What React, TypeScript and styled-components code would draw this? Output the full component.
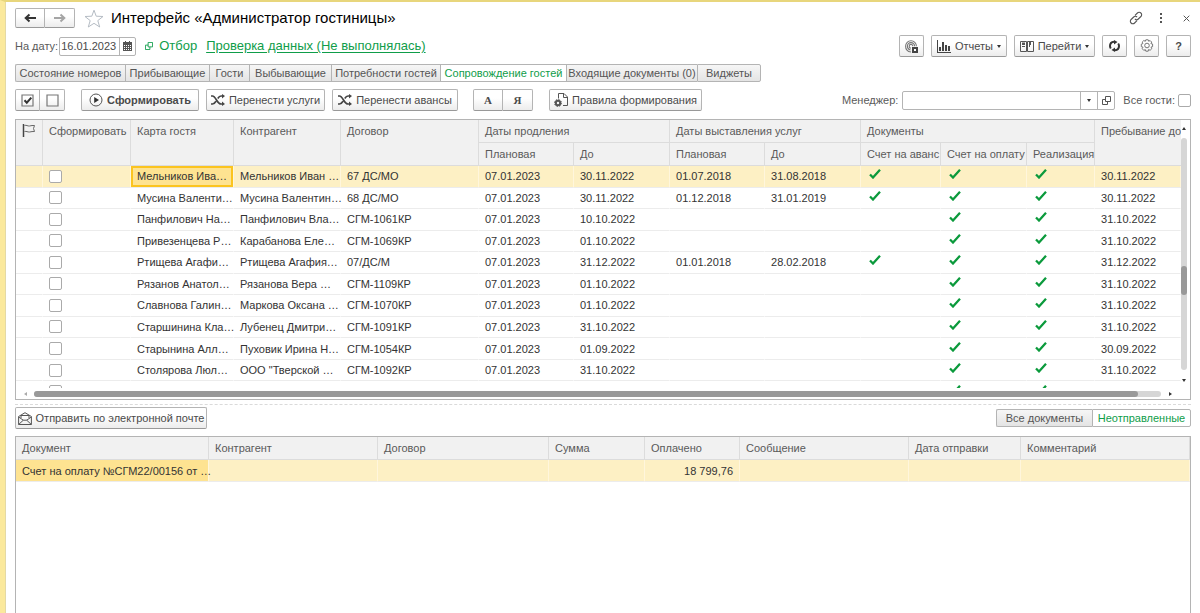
import React, { useState } from "react";
import styled, { createGlobalStyle, css } from "styled-components";

const GlobalStyle = createGlobalStyle`
  * { box-sizing: border-box; }
  body {
    margin: 0;
    background: #fff;
    color: #4a4a4a;
    font-family: "Liberation Sans", Arial, sans-serif;
    font-size: 11px;
    line-height: 14px;
  }
  button, input { font: inherit; color: inherit; }
`;

const green = "#0f9d4a";
const line = "#b4b4b4";

const Window = styled.div`
  min-height: 100vh;
  display: flex;
  flex-direction: column;
  border-left: 5px solid #fbe99c;
  border-top: 2px solid #e8d67c;
  padding: 6px 9px 0 10px;
  box-shadow: inset 1px 0 0 #e4d9a4;
`;

const Row = styled.div<{ $h: number; $mb: number }>`
  display: flex;
  align-items: center;
  height: ${(p) => p.$h}px;
  margin-bottom: ${(p) => p.$mb}px;
`;

const Group = styled.div<{ $gap?: number; $ml?: number; $push?: boolean }>`
  display: flex;
  align-items: center;
  flex-shrink: 0;
  gap: ${(p) => p.$gap ?? 0}px;
  margin-left: ${(p) => (p.$push ? "auto" : `${p.$ml ?? 0}px`)};
`;

const raised = css`
  border: 1px solid ${line};
  border-bottom-color: #999;
  border-radius: 2px;
  background: linear-gradient(#fff 40%, #ececec);
`;

const Button = styled.button<{ $w?: number; $bold?: boolean }>`
  ${raised}
  display: flex;
  align-items: center;
  justify-content: center;
  gap: 4px;
  height: 22px;
  width: ${(p) => (p.$w ? `${p.$w}px` : "auto")};
  padding: 0;
  white-space: nowrap;
  font-weight: ${(p) => (p.$bold ? 700 : 400)};
  svg { flex-shrink: 0; }
`;

const Joined = styled.div`
  display: flex;
  > button:not(:first-child) {
    border-left: 0;
    border-top-left-radius: 0;
    border-bottom-left-radius: 0;
  }
  > button:not(:last-child) {
    border-top-right-radius: 0;
    border-bottom-right-radius: 0;
  }
`;

const Letter = styled.span`
  font-family: "Liberation Serif", "Times New Roman", serif;
  font-weight: 700;
  font-size: 11px;
`;

const NavButton = styled(Button)`
  height: 20px;
  width: 30px;
`;

const IconButton = styled.button`
  display: flex;
  align-items: center;
  justify-content: center;
  width: 10px;
  height: 16px;
  padding: 0;
  border: 0;
  background: none;
  svg { flex-shrink: 0; }
`;

const Title = styled.h1`
  margin: 0 0 0 7px;
  color: #000;
  font-size: 15px;
  line-height: 20px;
  font-weight: 400;
  white-space: nowrap;
`;

const Label = styled.label`
  color: #5a5a5a;
  white-space: nowrap;
`;

const Field = styled.div<{ $w: number }>`
  display: flex;
  width: ${(p) => p.$w}px;
  height: 19px;
  border: 1px solid ${line};
  border-radius: 2px;
  background: #fff;
`;

const FieldInput = styled.input`
  flex: 1;
  min-width: 0;
  border: 0;
  padding: 0 1px;
  background: none;
  outline: 0;
`;

const FieldButton = styled.button<{ $w: number }>`
  display: flex;
  align-items: center;
  justify-content: center;
  width: ${(p) => p.$w}px;
  padding: 0;
  border: 0;
  border-left: 1px solid ${line};
  background: none;
`;

const FilterButton = styled.button`
  display: flex;
  align-items: center;
  gap: 6px;
  padding: 0;
  border: 0;
  background: none;
  color: ${green};
  font-size: 13px;
`;

const CheckLink = styled.a`
  color: ${green};
  font-size: 13px;
  text-decoration: underline;
  text-underline-offset: 2px;
  white-space: nowrap;
`;

const Tab = styled.button<{ $w: number; $active?: boolean }>`
  width: ${(p) => p.$w}px;
  height: 18px;
  padding: 0;
  border: 1px solid ${line};
  border-right-width: 0;
  background: ${(p) => (p.$active ? "#fff" : "linear-gradient(#f6f6f6, #e4e4e4)")};
  color: ${(p) => (p.$active ? green : "#555")};
  white-space: nowrap;
  &:first-child { border-radius: 2px 0 0 2px; }
  &:last-child { border-right-width: 1px; border-radius: 0 2px 2px 0; }
`;

const Tick = styled.input.attrs({ type: "checkbox" })`
  appearance: none;
  display: block;
  width: 13px;
  height: 13px;
  margin: 0;
  border: 1px solid #aaa;
  border-radius: 2px;
  background: #fff;
  &:checked { background: ${green}; }
`;

const Frame = styled.section`
  display: grid;
  grid-template-columns: 1fr 9px;
  grid-template-rows: 268px 11px;
  border: 1px solid ${line};
`;

const Clip = styled.div`
  overflow: hidden;
`;

const Grid = styled.table`
  width: 100%;
  table-layout: fixed;
  border-collapse: separate;
  border-spacing: 0;
`;

const GuestGrid = styled(Grid)`
  height: 283px;
`;

const Th = styled.th`
  height: 23px;
  padding: 4px 0 4px 6px;
  border-right: 1px solid #dcdcdc;
  border-bottom: 1px solid #dcdcdc;
  background: #f1f1f1;
  color: #5a5a5a;
  font-weight: 400;
  text-align: left;
  vertical-align: top;
  white-space: nowrap;
  &[data-last] { border-right: 0; }
`;

const Td = styled.td<{ $selected?: boolean; $focus?: "box" | "fill"; $right?: boolean }>`
  padding: 0 6px;
  border-right: 1px solid ${(p) => (p.$selected ? "#fff6dc" : "transparent")};
  border-bottom: 1px solid #ececec;
  background: ${(p) => (p.$focus ? "#fee391" : p.$selected ? "#fdf0c4" : "#fff")};
  box-shadow: ${(p) => (p.$focus === "box" ? "inset 0 0 0 2px #fbc41f" : "none")};
  color: #333;
  text-align: ${(p) => (p.$right ? "right" : "left")};
  white-space: nowrap;
  svg { display: block; margin: 0 0 4px 2px; }
`;

const VBar = styled.div`
  display: flex;
  flex-direction: column;
  align-items: center;
  justify-content: space-between;
  padding: 6px 3px 6px 0;
`;

const VTrack = styled.div`
  width: 6px;
  height: 232px;
  padding-top: 128px;
  border-radius: 3px;
  background: #d6d6d6;
`;

const VThumb = styled.div`
  height: 29px;
  border-radius: 3px;
  background: #999;
`;

const HBar = styled.div`
  grid-column: 1 / -1;
  display: flex;
  align-items: center;
  gap: 7px;
  padding: 0 18px 0 7px;
`;

const HTrack = styled.div`
  flex: 1;
  height: 6px;
  border-radius: 3px;
  background: #d6d6d6;
`;

const HThumb = styled.div`
  width: 98%;
  height: 6px;
  border-radius: 3px;
  background: #999;
`;

const Splitter = styled.div`
  height: 1px;
  margin: 4px 0 2px;
  border-top: 1px dashed #dadada;
`;

const Documents = styled.section`
  flex: 1;
  border: 1px solid ${line};
  border-bottom: 0;
`;

const DocRow = styled.tr`
  height: 22px;
`;

const Back = ({ dim }: { dim?: boolean }) => (
  <svg width="12" height="10" viewBox="0 0 12 10" fill="none" stroke={dim ? "#a5a5a5" : "#333"} strokeWidth="2">
    <path d={dim ? "M0 5h10M6.5 1.5 10.3 5 6.5 8.5" : "M12 5H2M5.5 1.5 1.7 5l3.8 3.5"} />
  </svg>
);

const Star = () => (
  <svg width="20" height="19" viewBox="0 0 20 19" fill="#fff" stroke="#b5bcc4">
    <path d="M10 1.2l2.200 6 6.800.3-5.200 4.100 1.900 6.400L10 14.300 4.300 18l1.900-6.400L1 7.500l6.800-.3z" />
  </svg>
);

const LinkIcon = () => (
  <svg width="14" height="14" viewBox="0 0 14 14" fill="none" stroke="#555" strokeWidth="1.1">
    <path d="M6 4.3 8.4 2a2.4 2.4 0 0 1 3.5 0 2.4 2.4 0 0 1 0 3.5L9.3 8a2.4 2.4 0 0 1-3.4 0M8 9.7 5.6 12a2.4 2.4 0 0 1-3.5 0 2.4 2.4 0 0 1 0-3.5L4.7 6a2.4 2.4 0 0 1 3.4 0" />
  </svg>
);

const Dots = () => (
  <svg width="4" height="10" viewBox="0 0 4 10" fill="#555">
    <path d="M1 0h2v2H1zM1 4h2v2H1zM1 8h2v2H1z" />
  </svg>
);

const Close = () => (
  <svg width="7" height="7" viewBox="0 0 7 7" stroke="#555">
    <path d="M.7.7l5.6 5.6M6.3.7.7 6.3" />
  </svg>
);

const Calendar = () => (
  <svg width="9" height="10" viewBox="0 0 9 10">
    <path d="M0 1h9v9H0zM2 0h1v2H2zM6 0h1v2H6z" fill="#555" />
    <path d="M1 4.5h7M1 6.5h7M1 8.5h7" stroke="#fff" strokeDasharray="1 1" />
  </svg>
);

const Overlap = ({ color, size }: { color: string; size: number }) => (
  <svg width={size} height={size} viewBox="0 0 9 9" fill="none" stroke={color}>
    <path d="M3.500 5.500v-5h5v5zM3.500 3.500h-3v5h5v-3" />
  </svg>
);

const CheckBoxIcon = ({ on }: { on?: boolean }) => (
  <svg width="13" height="13" viewBox="0 0 13 13" fill="none">
    <path d="M1 1h11v11H1z" stroke="#777" strokeWidth="1.2" />
    {on && <path d="M3.500 6.200l2.300 2.500 4.500-5" stroke="#333" strokeWidth="2" />}
  </svg>
);

const Play = () => (
  <svg width="14" height="14" viewBox="0 0 14 14">
    <circle cx="7" cy="7" r="6" fill="none" stroke="#555" />
    <path d="M5.200 4l4.800 3-4.800 3z" fill="#333" />
  </svg>
);

const Shuffle = () => (
  <svg width="14" height="12" viewBox="0 0 14 12">
    <path d="M0 2h1.500c1.500 0 2.500 1.500 4 4s2.500 4 4.500 4h1.500M0 10h1.500c1.500 0 2.500-1.200 3.500-2.800M6.800 4.500C7.700 3 8.500 2 10 2h1.500" fill="none" stroke="#444" strokeWidth="1.700" />
    <path d="M11 0l3 2-3 2.500zM11 7.500l3 2.500-3 2z" fill="#444" />
  </svg>
);

const Rules = () => (
  <svg width="14" height="14" viewBox="0 0 14 14" fill="none">
    <path d="M4.500 5.500v-5H10l3.500 3.500v8.500H9M9.500.500V4.500H13.500" stroke="#555" />
    <circle cx="4" cy="10" r="2.200" stroke="#555" strokeWidth="2" />
    <circle cx="4" cy="10" r="3.500" stroke="#555" strokeDasharray="1.4 1.350" />
  </svg>
);

const Fingerprint = () => (
  <svg width="13" height="13" viewBox="0 0 13 13" fill="none">
    <path d="M6 12C2.500 11.500.6 9 .6 6.200a5.400 5.400 0 0 1 10.800 0M5.500 10C3.400 9.500 2.400 8 2.400 6.200a3.600 3.600 0 0 1 7.200 0M6 8.300C4.700 8 4.200 7.200 4.200 6.200a1.800 1.800 0 0 1 3.600 0" stroke="#777" strokeWidth="1.1" />
    <path d="M7 7h6v6H7z" fill="#444" />
    <path d="M9 9h2v2H9z" fill="#fff" />
  </svg>
);

const Chart = () => (
  <svg width="14" height="13" viewBox="0 0 14 13" fill="#444">
    <path d="M0 0h1v12h13v1H0zM2 7h2v4H2zM5 2h2v9H5zM8 5h2v6H8zM11 6h2v5h-2z" />
  </svg>
);

const Book = () => (
  <svg width="14" height="11" viewBox="0 0 14 11" fill="none" stroke="#555">
    <path d="M.5.500h6v10h-6zM7.500.500h6v10h-6zM2 3.500h3M2 5.500h3M9.500 0v6" />
    <path d="M2 2.500h3M10 1v3" strokeWidth="2" />
  </svg>
);

const Refresh = () => (
  <svg width="13" height="12" viewBox="0 0 13 12">
    <path d="M6 1.700C3.500 1.900 2 3.700 2 6c0 1 .3 1.800.8 2.500M7 10.300c2.500-.2 4-2 4-4.300 0-1-.3-1.800-.8-2.500" fill="none" stroke="#333" strokeWidth="2" />
    <path d="M6 0l3.500 2L6 4.500zM7 12l-3.500-2L7 7.500z" fill="#333" />
  </svg>
);

const Gear = () => (
  <svg width="14" height="14" viewBox="0 0 14 14" fill="none" stroke="#777">
    <path d="M5.800.8h2.400l.5 1.500 1.400-.8 1.600 1.600-.8 1.500 1.700.4v2.700l-1.600.4.8 1.600-1.700 1.600-1.500-.8-.4 1.700H5.800l-.5-1.600-1.500.8-1.600-1.700.8-1.500-1.700-.5V5.100L2.900 4.600l-.7-1.500 1.600-1.600 1.500.8z" />
    <circle cx="7" cy="6.500" r="2.300" />
  </svg>
);

const Mail = () => (
  <svg width="14" height="13" viewBox="0 0 14 13" fill="none" stroke="#555">
    <path d="M.6 4.500 7 .7l6.400 3.800v8H.6zM.6 12.500l4.700-4.300h3.400l4.700 4.300M.6 5l4.700 3.200M13.400 5 8.700 8.200M3 6V3.500h8V6" />
  </svg>
);

const Flag = () => (
  <svg width="13" height="13" viewBox="0 0 13 13" fill="none">
    <path d="M1.500 0v13" stroke="#444" strokeWidth="1.500" />
    <path d="M2.500 1.500c2-.8 3 .8 5 .5s3-.8 5-.5l-1 3 1 3c-2-.3-3 .3-5 .5s-3-1-5-.5" stroke="#666" />
  </svg>
);

const Check = () => (
  <svg width="12" height="10" viewBox="0 0 12 10" fill="none" stroke="#0b9a3c" strokeWidth="2.300">
    <path d="M1 5.500l3 3L11 .8" />
  </svg>
);

const Arrow = ({ dir, dim }: { dir: "up" | "down" | "left" | "right"; dim?: boolean }) => {
  const d = { up: "M0 4h4L2 1z", down: "M0 1h4L2 4z", left: "M4 0v4L1 2z", right: "M1 0v4l3-2z" }[dir];
  return (
    <svg width="4" height="4" viewBox="0 0 4 4" fill={dim ? "#aaa" : "#333"}>
      <path d={d} />
    </svg>
  );
};

const tabs: [string, number][] = [
  ["Состояние номеров", 110],
  ["Прибывающие", 84],
  ["Гости", 40],
  ["Выбывающие", 82],
  ["Потребности гостей", 109],
  ["Сопровождение гостей", 126],
  ["Входящие документы (0)", 131],
  ["Виджеты", 64],
];

type Guest = [string, string, string, string, string, string, boolean, string];

const guests: Guest[] = [
  ["Мельников Ива…", "Мельников Иван …", "67 ДС/МО", "30.11.2022", "01.07.2018", "31.08.2018", true, "30.11.2022"],
  ["Мусина Валенти…", "Мусина Валентин…", "68 ДС/МО", "30.11.2022", "01.12.2018", "31.01.2019", true, "30.11.2022"],
  ["Панфилович На…", "Панфилович Вла…", "СГМ-1061КР", "10.10.2022", "", "", false, "31.10.2022"],
  ["Привезенцева Р…", "Карабанова Еле…", "СГМ-1069КР", "01.10.2022", "", "", false, "31.10.2022"],
  ["Ртищева Агафи…", "Ртищева Агафия…", "07/ДС/М", "31.12.2022", "01.01.2018", "28.02.2018", true, "31.12.2022"],
  ["Рязанов Анатол…", "Рязанова Вера …", "СГМ-1109КР", "01.10.2022", "", "", false, "31.10.2022"],
  ["Славнова Галин…", "Маркова Оксана …", "СГМ-1070КР", "01.10.2022", "", "", false, "31.10.2022"],
  ["Старшинина Кла…", "Лубенец Дмитри…", "СГМ-1091КР", "31.10.2022", "", "", false, "31.10.2022"],
  ["Старынина Алл…", "Пуховик Ирина Н…", "СГМ-1054КР", "01.09.2022", "", "", false, "30.09.2022"],
  ["Столярова Люл…", "ООО \"Тверской …", "СГМ-1092КР", "31.10.2022", "", "", false, "31.10.2022"],
  ["", "", "", "", "", "", false, ""],
];

const guestColumns = [27, 88, 103, 107, 138, 95, 96, 95, 96, 80, 86, 68, 86];

const docColumns: [string, number][] = [
  ["Документ", 193],
  ["Контрагент", 169],
  ["Договор", 171],
  ["Сумма", 96],
  ["Оплачено", 95],
  ["Сообщение", 169],
  ["Дата отправки", 112],
  ["Комментарий", 169],
];

export default function App() {
  const [tab, setTab] = useState(5);
  const [unsent, setUnsent] = useState(true);
  return (
    <>
      <GlobalStyle />
      <Window>
        <Row as="header" $h={20} $mb={7}>
          <Joined>
            <NavButton aria-label="Назад"><Back /></NavButton>
            <NavButton aria-label="Вперед"><Back dim /></NavButton>
          </Joined>
          <Group $ml={9}><Star /></Group>
          <Title>Интерфейс «Администратор гостиницы»</Title>
          <Group $push $gap={15}>
            <IconButton aria-label="Ссылка"><LinkIcon /></IconButton>
            <IconButton aria-label="Меню"><Dots /></IconButton>
            <IconButton aria-label="Закрыть"><Close /></IconButton>
          </Group>
        </Row>

        <Row $h={22} $mb={7}>
          <Group $gap={1}>
            <Label htmlFor="date">На дату:</Label>
            <Field $w={77}>
              <FieldInput id="date" defaultValue="16.01.2023" />
              <FieldButton $w={16} aria-label="Календарь"><Calendar /></FieldButton>
            </Field>
          </Group>
          <Group $ml={9} $gap={9}>
            <FilterButton><Overlap color={green} size={8} />Отбор</FilterButton>
            <CheckLink href="#check">Проверка данных (Не выполнялась)</CheckLink>
          </Group>
          <Group $push $gap={7}>
            <Button $w={25} aria-label="Доступ"><Fingerprint /></Button>
            <Button $w={76}><Chart />Отчеты <Arrow dir="down" /></Button>
            <Button $w={81}><Book />Перейти <Arrow dir="down" /></Button>
            <Button $w={25} aria-label="Обновить"><Refresh /></Button>
            <Button $w={25} aria-label="Настройки"><Gear /></Button>
            <Button $w={25} $bold>?</Button>
          </Group>
        </Row>

        <Row as="nav" $h={18} $mb={7}>
          {tabs.map(([name, w], i) => (
            <Tab key={name} $w={w} $active={tab === i} onClick={() => setTab(i)}>{name}</Tab>
          ))}
        </Row>

        <Row $h={22} $mb={8}>
          <Joined>
            <Button $w={25} aria-label="Отметить все"><CheckBoxIcon on /></Button>
            <Button $w={25} aria-label="Снять отметки"><CheckBoxIcon /></Button>
          </Joined>
          <Group $ml={16} $gap={7}>
            <Button $w={118} $bold><Play />Сформировать</Button>
            <Button $w={119}><Shuffle />Перенести услуги</Button>
            <Button $w={126}><Shuffle />Перенести авансы</Button>
          </Group>
          <Group $ml={15} $gap={16}>
            <Joined>
              <Button $w={30}><Letter>А</Letter></Button>
              <Button $w={30}><Letter>Я</Letter></Button>
            </Joined>
            <Button $w={153}><Rules />Правила формирования</Button>
          </Group>
          <Group $push $gap={4}>
            <Label htmlFor="manager">Менеджер:</Label>
            <Field $w={213}>
              <FieldInput id="manager" />
              <FieldButton $w={17} aria-label="Выбрать"><Arrow dir="down" /></FieldButton>
              <FieldButton $w={17} aria-label="Открыть"><Overlap color="#555" size={9} /></FieldButton>
            </Field>
          </Group>
          <Group $ml={8} $gap={3}>
            <Label htmlFor="all">Все гости:</Label>
            <Tick id="all" />
          </Group>
        </Row>

        <Frame>
          <Clip>
            <GuestGrid>
              <colgroup>
                {guestColumns.map((w, i) => <col key={i} width={w} />)}
              </colgroup>
              <thead>
                <tr>
                  <Th rowSpan={2} aria-label="Флаг"><Flag /></Th>
                  <Th rowSpan={2}>Сформировать</Th>
                  <Th rowSpan={2}>Карта гостя</Th>
                  <Th rowSpan={2}>Контрагент</Th>
                  <Th rowSpan={2}>Договор</Th>
                  <Th colSpan={2}>Даты продления</Th>
                  <Th colSpan={2}>Даты выставления услуг</Th>
                  <Th colSpan={3}>Документы</Th>
                  <Th rowSpan={2} data-last>Пребывание до</Th>
                </tr>
                <tr>
                  <Th>Плановая</Th>
                  <Th>До</Th>
                  <Th>Плановая</Th>
                  <Th>До</Th>
                  <Th>Счет на аванс</Th>
                  <Th>Счет на оплату</Th>
                  <Th>Реализация</Th>
                </tr>
              </thead>
              <tbody>
                {guests.map(([card, client, contract, till, plan, to, advance, stay], i) => {
                  const s = i === 0;
                  return (
                    <tr key={i}>
                      <Td $selected={s} />
                      <Td $selected={s}><Tick aria-label={`Сформировать ${card}`} /></Td>
                      <Td $selected={s} $focus={s ? "box" : undefined}>{card}</Td>
                      <Td $selected={s}>{client}</Td>
                      <Td $selected={s}>{contract}</Td>
                      <Td $selected={s}>{card && "07.01.2023"}</Td>
                      <Td $selected={s}>{till}</Td>
                      <Td $selected={s}>{plan}</Td>
                      <Td $selected={s}>{to}</Td>
                      <Td $selected={s}>{advance && <Check />}</Td>
                      <Td $selected={s}><Check /></Td>
                      <Td $selected={s}><Check /></Td>
                      <Td $selected={s}>{stay}</Td>
                    </tr>
                  );
                })}
              </tbody>
            </GuestGrid>
          </Clip>
          <VBar>
            <Arrow dir="up" />
            <VTrack><VThumb /></VTrack>
            <Arrow dir="down" />
          </VBar>
          <HBar>
            <Arrow dir="left" dim />
            <HTrack><HThumb /></HTrack>
            <Arrow dir="right" />
          </HBar>
        </Frame>

        <Splitter />

        <Row $h={22} $mb={7}>
          <Button $w={192}><Mail />Отправить по электронной почте</Button>
          <Group $push>
            <Tab $w={96} $active={!unsent} onClick={() => setUnsent(false)}>Все документы</Tab>
            <Tab $w={99} $active={unsent} onClick={() => setUnsent(true)}>Неотправленные</Tab>
          </Group>
        </Row>

        <Documents>
          <Grid>
            <colgroup>
              {docColumns.map(([name, w]) => <col key={name} width={w} />)}
            </colgroup>
            <thead>
              <tr>{docColumns.map(([name]) => <Th key={name}>{name}</Th>)}</tr>
            </thead>
            <tbody>
              <DocRow>
                <Td $selected $focus="fill">Счет на оплату №СГМ22/00156 от …</Td>
                <Td $selected />
                <Td $selected />
                <Td $selected />
                <Td $selected $right>18 799,76</Td>
                <Td $selected />
                <Td $selected />
                <Td $selected />
              </DocRow>
            </tbody>
          </Grid>
        </Documents>
      </Window>
    </>
  );
}
